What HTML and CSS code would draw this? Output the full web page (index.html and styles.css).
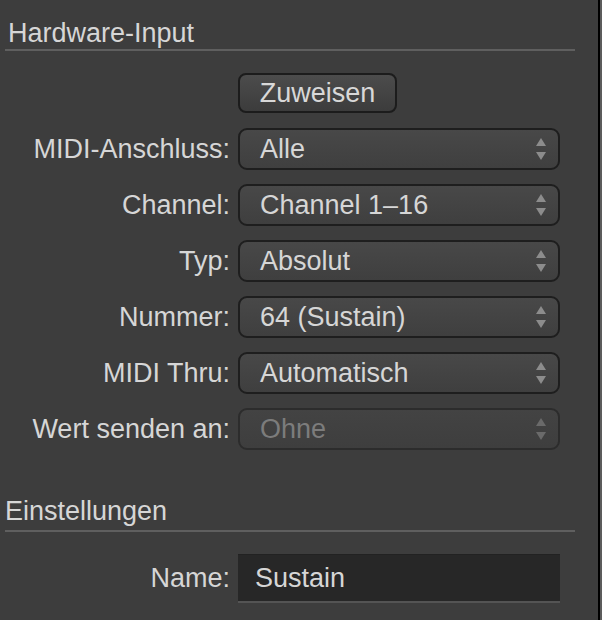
FILE: index.html
```html
<!DOCTYPE html>
<html lang="de">
<head>
  <meta charset="UTF-8">
  <title>Hardware-Input</title>
  <link rel="stylesheet" href="styles.css">
</head>
<body>

  <div class="panel">

    <!-- Hardware-Input -->
    <h2 class="section-title first">Hardware-Input</h2>
    <div class="form">
      <span></span>
      <button class="assign" type="button">Zuweisen</button>

      <label>MIDI-Anschluss:</label>
      <div class="select"><span>Alle</span><svg class="arrows" viewBox="0 0 10 22"><path d="M5 0 L10 8 L0 8 Z M0 14 L10 14 L5 22 Z"/></svg></div>

      <label>Channel:</label>
      <div class="select"><span>Channel 1–16</span><svg class="arrows" viewBox="0 0 10 22"><path d="M5 0 L10 8 L0 8 Z M0 14 L10 14 L5 22 Z"/></svg></div>

      <label>Typ:</label>
      <div class="select"><span>Absolut</span><svg class="arrows" viewBox="0 0 10 22"><path d="M5 0 L10 8 L0 8 Z M0 14 L10 14 L5 22 Z"/></svg></div>

      <label>Nummer:</label>
      <div class="select"><span>64 (Sustain)</span><svg class="arrows" viewBox="0 0 10 22"><path d="M5 0 L10 8 L0 8 Z M0 14 L10 14 L5 22 Z"/></svg></div>

      <label>MIDI Thru:</label>
      <div class="select"><span>Automatisch</span><svg class="arrows" viewBox="0 0 10 22"><path d="M5 0 L10 8 L0 8 Z M0 14 L10 14 L5 22 Z"/></svg></div>

      <label>Wert senden an:</label>
      <div class="select disabled"><span>Ohne</span><svg class="arrows" viewBox="0 0 10 22"><path d="M5 0 L10 8 L0 8 Z M0 14 L10 14 L5 22 Z"/></svg></div>
    </div>

    <!-- Einstellungen -->
    <h2 class="section-title">Einstellungen</h2>
    <div class="form settings">
      <label>Name:</label>
      <div class="text-field">Sustain</div>
    </div>

  </div>

</body>
</html>
```

FILE: styles.css
```css
body {
  margin: 0;
  background-color: #5c5c5c;
  color: #d6d6d6;
  font-family: "Liberation Sans", Arial, sans-serif;
  font-size: 27px;
}

.panel {
  width: 598px;
  min-height: 100vh;
  background-color: #3d3d3d;
  border-right: 2px solid #000;
  overflow: hidden;
}

.section-title {
  margin: 46px 23px 0 5px;
  padding: 0 0 4px 0;
  font-size: 27px;
  font-weight: normal;
  line-height: 30px;
  border-bottom: 2px solid #5f5f5f;
}

.section-title.first {
  margin-top: 0;
  padding-top: 18px;
  padding-bottom: 1px;
  padding-left: 3px;
}

.form {
  display: grid;
  grid-template-columns: 230px 322px;
  column-gap: 8px;
  row-gap: 14px;
  margin-top: 22px;
}

.form label {
  align-self: center;
  text-align: right;
  white-space: nowrap;
}

.assign {
  justify-self: start;
  width: 159px;
  height: 40px;
  margin-bottom: 1px;
  padding: 0;
  font: inherit;
  color: #d8d8d8;
  background: linear-gradient(#4c4c4c, #3c3c3c);
  border: 2px solid #1c1c1c;
  border-radius: 8px;
}

.select {
  display: flex;
  align-items: center;
  justify-content: space-between;
  height: 42px;
  box-sizing: border-box;
  padding: 0 12px 0 20px;
  background: linear-gradient(#484848, #3f3f3f);
  border: 2px solid #1e1e1e;
  border-radius: 9px;
}

.arrows {
  width: 10px;
  height: 22px;
  fill: #8c8c8c;
}

.select.disabled {
  color: #7c7c7c;
  background: linear-gradient(#434343, #3e3e3e);
  border-color: #2c2c2c;
}

.select.disabled .arrows {
  fill: #6a6a6a;
}

.text-field {
  height: 46px;
  line-height: 46px;
  padding-left: 17px;
  background-color: #272727;
  border-top: 1px solid #222;
  border-bottom: 2px solid #545454;
  box-sizing: content-box;
}
```
